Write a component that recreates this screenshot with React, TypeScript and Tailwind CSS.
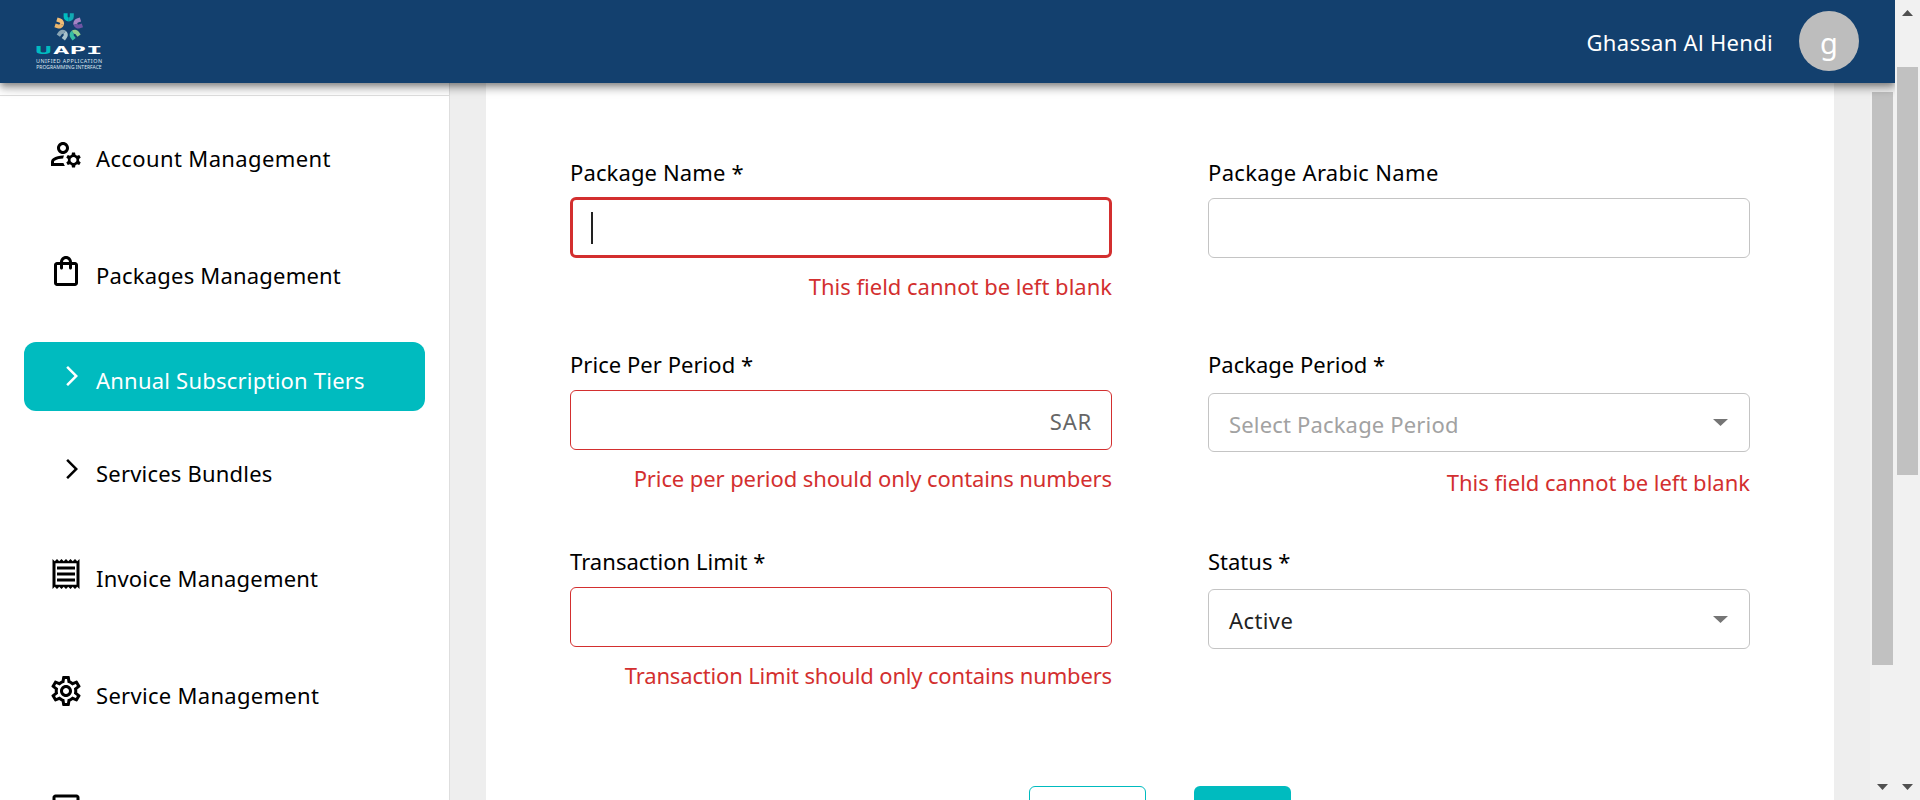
import type { ReactNode } from "react";
import {
  MdArrowForwardIos,
  MdOutlineArticle,
  MdOutlineManageAccounts,
  MdOutlineReceipt,
  MdOutlineSettings,
  MdOutlineShoppingBag,
} from "react-icons/md";

const petals = [
  { angle: 0, left: "#00bcc0", right: "#12a9b3" },
  { angle: 72, left: "#a584c4", right: "#6f55a4" },
  { angle: 144, left: "#8fce8c", right: "#35bfa5" },
  { angle: 216, left: "#a9c3cc", right: "#8aa5b4" },
  { angle: 288, left: "#eab56c", right: "#f0bd78" },
];

const wordmark = [
  { char: "U", x: 35.2, fill: "#00bcc0" },
  { char: "A", x: 53, fill: "#ffffff" },
  { char: "P", x: 69.6, fill: "#ffffff" },
  { char: "I", x: 86, fill: "#ffffff" },
];

function Logo() {
  return (
    <svg className="h-[67px] w-[68px] overflow-visible" viewBox="35 8 68 67" fill="none">
      {petals.map((p) => (
        <g key={p.angle} transform={`translate(68.7 26.6) rotate(${p.angle})`} strokeWidth="4">
          <path d="M-3.100 -13.400v3.200a3.100 3.100 0 0 0 3.100 3.100" stroke={p.left} />
          <path d="M3.100 -13.400v3.200a3.100 3.100 0 0 1 -3.100 3.100" stroke={p.right} />
        </g>
      ))}
      {wordmark.map((w) => (
        <text key={w.char} x={w.x} y="53.500" fontFamily="DejaVu Sans Mono" fontWeight="700" fontSize="11" textLength="16.500" lengthAdjust="spacingAndGlyphs" fill={w.fill}>
          {w.char}
        </text>
      ))}
      <text x="36" y="63.400" fontFamily="Noto Sans" fontSize="5.400" textLength="66" fill="#dfe7ee">
        UNIFIED APPLICATION
      </text>
      <text x="36.300" y="68.900" fontFamily="Noto Sans" fontSize="5.400" textLength="65.300" lengthAdjust="spacingAndGlyphs" fill="#dfe7ee">
        PROGRAMMING INTERFACE
      </text>
    </svg>
  );
}

function NavItem({ icon, label, track }: { icon: ReactNode; label?: string; track?: string }) {
  return (
    <li className="my-6 flex h-[69px] shrink-0 items-start pl-6">
      <span className="mt-4 h-9 w-9 text-[36px]">{icon}</span>
      <span className={`mt-[23px] ml-3 whitespace-nowrap ${track ?? ""}`}>{label}</span>
    </li>
  );
}

function SubItem({ label, active, track }: { label: string; active?: boolean; track?: string }) {
  return (
    <li
      className={`my-3 flex h-[69px] shrink-0 items-start rounded-xl pl-9 ${active ? "bg-[#00bbbf] text-white" : ""}`}
    >
      <span className="mt-[22px] h-6 w-6 text-[24px]">
        <MdArrowForwardIos />
      </span>
      <span className={`mt-[23px] ml-3 whitespace-nowrap ${track ?? ""}`}>{label}</span>
    </li>
  );
}

function Label({ children, track }: { children: ReactNode; track?: string }) {
  return <label className={`whitespace-nowrap ${track ?? ""}`}>{children}</label>;
}

function ErrorText({ children, track, top }: { children: ReactNode; track?: string; top?: string }) {
  return (
    <p className={`text-right whitespace-nowrap text-[#d32f2f] ${top ?? "mt-[13px]"} ${track ?? ""}`}>{children}</p>
  );
}

function DropArrow() {
  return (
    <svg className="mr-[21px] h-[7px] w-[15px]" viewBox="0 0 15 7">
      <path d="M0 0h15L7.500 7z" fill="#757575" />
    </svg>
  );
}

function ScrollBar({ children }: { children: ReactNode }) {
  return (
    <div className="flex h-full w-[25px] shrink-0 flex-col items-center bg-[#f1f1f1]">
      {children}
      <svg className="mt-auto mb-2.5 h-[6px] w-[11px]" viewBox="0 0 11 6">
        <path d="M0 0h11L5.500 6z" fill="#505050" />
      </svg>
    </div>
  );
}

export default function App() {
  return (
    <div className="flex h-[800px] w-[1920px] overflow-hidden bg-white font-['Noto_Sans',sans-serif] text-[22px] leading-[30px] text-black">
      <div className="flex h-full w-[1895px] flex-col overflow-hidden">
        <header className="relative z-10 flex h-[83px] shrink-0 items-center bg-[#13406e] pl-[35px] text-white shadow-[0_3px_6px_-1px_rgba(0,0,0,0.3),0_6px_8px_0_rgba(0,0,0,0.2),0_1px_15px_0_rgba(0,0,0,0.14)]">
          <Logo />
          <span className="ml-auto whitespace-nowrap tracking-[0.3px]">Ghassan Al Hendi</span>
          <span className="mr-9 mb-px ml-[26px] flex h-[60px] w-[60px] items-center justify-center rounded-full bg-[#bdbdbd] pt-[3px] text-[29px]">
            g
          </span>
        </header>

        <div className="flex min-h-0 flex-1">
          <nav className="h-full w-[450px] shrink-0 overflow-hidden border-r border-[#dedede] pt-3">
            <ul className="flex flex-col border-t border-[#dedede] px-6">
              <NavItem icon={<MdOutlineManageAccounts />} label="Account Management" track="tracking-[0.37px]" />
              <NavItem icon={<MdOutlineShoppingBag />} label="Packages Management" track="tracking-[0.2px]" />
              <SubItem label="Annual Subscription Tiers" active track="tracking-[0.22px]" />
              <SubItem label="Services Bundles" track="tracking-[0.2px]" />
              <NavItem icon={<MdOutlineReceipt />} label="Invoice Management" track="tracking-[0.2px]" />
              <NavItem icon={<MdOutlineSettings />} label="Service Management" track="tracking-[0.3px]" />
              <NavItem icon={<MdOutlineArticle />} />
            </ul>
          </nav>

          <main className="flex h-full flex-1 justify-between overflow-hidden bg-[#eeeeee] pl-9">
            <section className="h-full w-[1348px] overflow-hidden bg-white pt-[74px]">
              <form className="flex flex-col">
                <div className="grid grid-cols-[542px_542px] gap-x-24 pl-[84px]">
                  <div className="flex h-[192px] flex-col">
                    <Label track="tracking-[0.13px]">Package Name *</Label>
                    <div className="mt-2.5 flex h-[61px] items-center rounded-md border-[3px] border-[#d32f2f] pl-[18px]">
                      <span className="h-8 w-0.5 bg-[#222]" />
                    </div>
                    <ErrorText>This field cannot be left blank</ErrorText>
                  </div>
                  <div className="flex h-[192px] flex-col">
                    <Label track="tracking-[0.32px]">Package Arabic Name</Label>
                    <div className="mt-[11px] h-[60px] rounded-md border border-[#c4c4c4]" />
                  </div>

                  <div className="flex h-[197px] flex-col">
                    <Label track="tracking-[0.04px]">Price Per Period *</Label>
                    <div className="mt-[11px] flex h-[60px] items-center justify-end rounded-md border border-[#d32f2f] pt-0.5 pr-[19px] tracking-[0.8px] text-[#666]">
                      SAR
                    </div>
                    <ErrorText track="tracking-[-0.1px]">Price per period should only contains numbers</ErrorText>
                  </div>
                  <div className="flex h-[197px] flex-col">
                    <Label>Package Period *</Label>
                    <div className="mt-3.5 flex h-[59px] items-center justify-between rounded-md border border-[#c4c4c4] pl-5 text-[#a2a2a2]">
                      <span className="pt-0.5 tracking-[0.17px]">Select Package Period</span>
                      <DropArrow />
                    </div>
                    <ErrorText top="mt-[15px]">This field cannot be left blank</ErrorText>
                  </div>

                  <div className="flex h-[240px] flex-col">
                    <Label track="tracking-[0.04px]">Transaction Limit *</Label>
                    <div className="mt-[11px] h-[60px] rounded-md border border-[#d32f2f]" />
                    <ErrorText track="tracking-[-0.16px]">Transaction Limit should only contains numbers</ErrorText>
                  </div>
                  <div className="flex h-[240px] flex-col">
                    <Label>Status *</Label>
                    <div className="mt-[13px] flex h-[60px] items-center justify-between rounded-md border border-[#c4c4c4] pl-5 text-[#222]">
                      <span className="pt-0.5 tracking-[0.4px]">Active</span>
                      <DropArrow />
                    </div>
                  </div>
                </div>
                <div className="flex justify-center gap-12">
                  <div className="h-[54px] w-[117px] rounded-md border border-[#00bbbf]" />
                  <div className="h-[54px] w-[97px] rounded-md bg-[#00bbbf]" />
                </div>
              </form>
            </section>
            <ScrollBar>
              <div className="mt-[9px] h-[573px] w-[21px] bg-[#c1c1c1]" />
            </ScrollBar>
          </main>
        </div>
      </div>

      <ScrollBar>
        <svg className="mt-2.5 h-[6px] w-[11px]" viewBox="0 0 11 6">
          <path d="M0 6h11L5.500 0z" fill="#505050" />
        </svg>
        <div className="mt-[51px] h-[408px] w-[21px] bg-[#c1c1c1]" />
      </ScrollBar>
    </div>
  );
}
